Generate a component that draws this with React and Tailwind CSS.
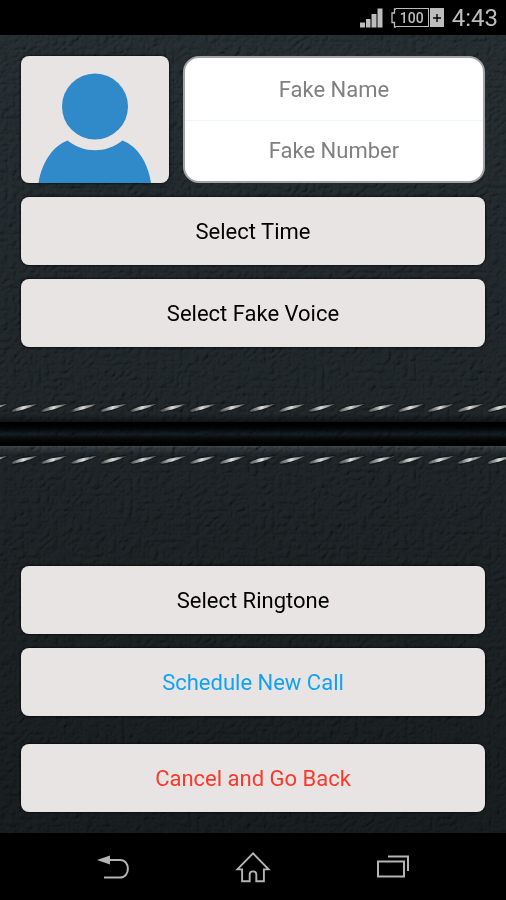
import React from "react";

function StatusBar() {
  return (
    <header className="flex h-[35px] shrink-0 items-center justify-end gap-2 bg-black pr-2 text-[#bdbdbd]">
      <svg width="23" height="20" viewBox="0 0 23 20" fill="#bdbdbd" role="img" aria-label="Signal strength">
        <rect x="0" y="14.500" width="5" height="5" />
        <rect x="6" y="11" width="4.500" height="8.500" />
        <rect x="11.500" y="6" width="5" height="13.500" />
        <rect x="17.500" y="0.500" width="5" height="19" />
      </svg>
      <div className="flex h-5 items-center">
        <svg width="5" height="20" viewBox="0 0 5 20" fill="none" stroke="#bdbdbd" strokeWidth="1.300" aria-hidden="true">
          <path d="M5 1H3.500V5H1V14.500H3.500V19H5" />
        </svg>
        <span className="flex h-[19px] items-center border-y border-r border-[#bdbdbd] px-1 text-[14px] leading-4 font-medium">100</span>
        <span className="ml-px flex h-[19px] w-[14px] items-center justify-center bg-[#bdbdbd]">
          <svg width="10" height="10" viewBox="0 0 10 10" stroke="#000" strokeWidth="1.400" aria-hidden="true">
            <path d="M5 1V9M1 5H9" />
          </svg>
        </span>
      </div>
      <time className="text-2xl leading-8">4:43</time>
    </header>
  );
}

function Stitches({ id }) {
  return (
    <svg className="h-3 w-full shrink-0" aria-hidden="true">
      <defs>
        <linearGradient id={id + "-thread"} x1="0" x2="1" y1="0" y2="0">
          <stop offset="0" stopColor="#8a8a86" stopOpacity="0.400" />
          <stop offset="0.450" stopColor="#dddbd6" />
          <stop offset="1" stopColor="#77777a" stopOpacity="0.500" />
        </linearGradient>
        <pattern id={id} width="29.750" height="12" patternUnits="userSpaceOnUse" x="10">
          <path d="M1 7Q12 1 28 1L28 3Q18 8 3 11.500Z" fill="#050708" opacity="0.400" />
          <path d="M1.500 8.500Q6 5.500 14 4L28 1.800Q22 5 14 7.200L3 10Z" fill={"url(#" + id + "-thread)"} />
        </pattern>
      </defs>
      <rect width="100%" height="12" fill={"url(#" + id + ")"} />
    </svg>
  );
}

function LeatherBackdrop() {
  return (
    <div className="col-start-1 row-start-1 grid overflow-hidden bg-linear-to-b from-[#23292c] to-[#161a1c]" aria-hidden="true">
      <svg className="col-start-1 row-start-1 h-full w-full opacity-45 mix-blend-overlay">
        <filter id="leather" x="0" y="0" width="100%" height="100%">
          <feTurbulence type="turbulence" baseFrequency="0.120 0.130" numOctaves="2" seed="8" result="grain" />
          <feDiffuseLighting in="grain" surfaceScale="2.500" diffuseConstant="0.900" lightingColor="#b4bec2">
            <feDistantLight azimuth="225" elevation="45" />
          </feDiffuseLighting>
        </filter>
        <rect width="100%" height="100%" filter="url(#leather)" />
      </svg>
      <div className="col-start-1 row-start-1 flex flex-col">
        <div className="flex-1" />
        <Stitches id="stitch-top" />
        <div className="h-2 bg-linear-to-b from-transparent to-black/50" />
        <div className="h-6 bg-linear-to-b from-black via-[#151b20] to-black" />
        <div className="h-2 border-t border-[#3a4042] bg-linear-to-b from-white/10 to-transparent" />
        <Stitches id="stitch-bottom" />
        <div className="flex-1" />
      </div>
    </div>
  );
}

function ActionButton({ children, tone = "text-black" }) {
  return (
    <button
      type="button"
      className={
        "h-[68px] w-full rounded-lg bg-[#e8e4e3] pt-0.5 text-[22px] leading-7 shadow-[0_0_2px_1px_#0008] " + tone
      }
    >
      {children}
    </button>
  );
}

function ContactPhoto() {
  return (
    <button
      type="button"
      aria-label="Choose contact photo"
      className="flex w-[148px] shrink-0 items-end justify-center overflow-hidden rounded-lg bg-[#e8e4e3] shadow-[0_0_2px_1px_#0008]"
    >
      <svg width="114" height="110" viewBox="0 0 114 110" fill="#3089c9" aria-hidden="true">
        <circle cx="57" cy="33.500" r="33" />
        <path d="M0.500 110C4 89 15 73 29.500 67.500C46 80.500 68 80.500 84.500 67.500C99 73 110 89 113 110Z" />
      </svg>
    </button>
  );
}

function ContactField({ label, type }) {
  return (
    <input
      type={type}
      aria-label={label}
      placeholder={label}
      className="min-h-0 w-full flex-1 bg-transparent text-center text-[22px] leading-7 text-black outline-none placeholder:text-[#808080]"
    />
  );
}

function NavigationBar() {
  return (
    <nav className="flex h-[67px] shrink-0 items-center justify-center gap-[104px] bg-black">
      <button type="button" aria-label="Back" className="flex w-9 justify-center">
        <svg width="34" height="26" viewBox="0 0 34 26" fill="none" stroke="#b4b4b4" strokeWidth="2" aria-hidden="true">
          <path d="M12 6H24C34.500 6 34.500 23.500 24 23.500H8" />
          <path d="M1 6L14 1.500V10.500Z" fill="#b4b4b4" stroke="none" />
        </svg>
      </button>
      <button type="button" aria-label="Home" className="flex w-9 justify-center">
        <svg width="38" height="34" viewBox="0 0 38 34" fill="none" stroke="#b4b4b4" strokeWidth="2" aria-hidden="true">
          <path d="M19 2.500L35.500 19.500H30.500V32H22.500V25C22.500 20.500 15.500 20.500 15.500 25V32H7.500V19.500H2.500Z" />
        </svg>
      </button>
      <button type="button" aria-label="Recent apps" className="flex w-9 justify-center">
        <svg width="34" height="24" viewBox="0 0 34 24" fill="none" stroke="#b4b4b4" strokeWidth="2" aria-hidden="true">
          <rect x="2" y="6.500" width="26" height="15" />
          <path d="M12 1.500H32V16" />
        </svg>
      </button>
    </nav>
  );
}

export default function App() {
  return (
    <div className="flex min-h-screen flex-col bg-black font-['Roboto',sans-serif]">
      <StatusBar />
      <main className="grid flex-1">
        <LeatherBackdrop />
        <form className="z-10 col-start-1 row-start-1 flex flex-col gap-[14px] p-[21px]">
          <div className="flex h-[127px] gap-[14px]">
            <ContactPhoto />
            <div className="flex min-w-0 flex-1 flex-col rounded-2xl border-2 border-[#a2a3a5] bg-white pt-0.5">
              <ContactField label="Fake Name" type="text" />
              <div className="h-px bg-[#eff6fa]" />
              <ContactField label="Fake Number" type="tel" />
            </div>
          </div>
          <ActionButton>Select Time</ActionButton>
          <ActionButton>Select Fake Voice</ActionButton>
          <div className="flex-1" />
          <ActionButton>Select Ringtone</ActionButton>
          <ActionButton tone="text-[#12a1f3]">Schedule New Call</ActionButton>
          <div className="pt-[14px]">
            <ActionButton tone="text-[#f9392c]">Cancel and Go Back</ActionButton>
          </div>
        </form>
      </main>
      <NavigationBar />
    </div>
  );
}
